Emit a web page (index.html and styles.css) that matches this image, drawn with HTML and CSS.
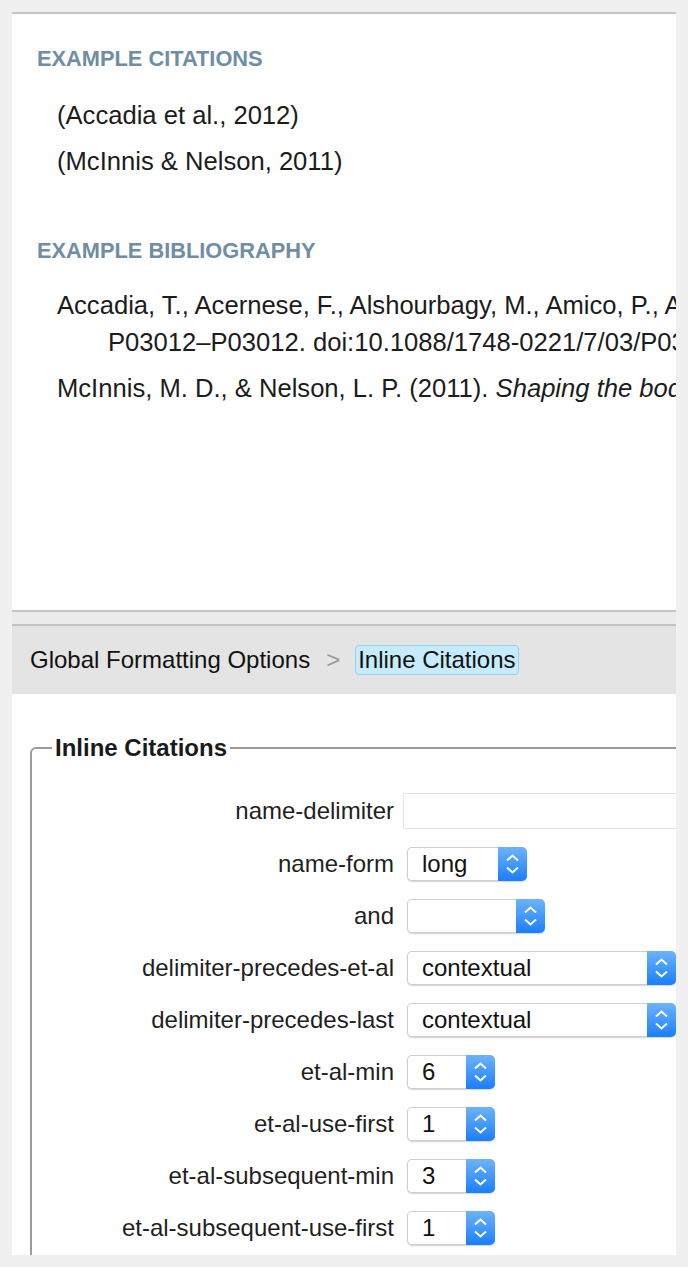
FILE: index.html
```html
<!DOCTYPE html>
<html lang="en">
<head>
<meta charset="utf-8">
<title>Inline Citations</title>
<link rel="stylesheet" href="styles.css">
</head>
<body>
<div class="app">
  <section class="preview">
    <h2 class="heading">EXAMPLE CITATIONS</h2>
    <div class="citations">
      <p>(Accadia et al., 2012)</p>
      <p>(McInnis &amp; Nelson, 2011)</p>
    </div>
    <h2 class="heading heading-bib">EXAMPLE BIBLIOGRAPHY</h2>
    <div class="bib">
      <p class="entry">Accadia, T., Acernese, F., Alshourbagy, M., Amico, P., Antonucci, F., Aoudia, S., … Zendri, J.-P. (2012). Virgo: a laser interferometer to detect gravitational waves. <i>Journal of Instrumentation</i>, <i>7</i>(3),<br>P03012–P03012. doi:10.1088/1748-0221/7/03/P03012</p>
      <p class="entry">McInnis, M. D., &amp; Nelson, L. P. (2011). <i>Shaping the body politic: Art and political formation in early America</i>. Charlottesville: University of Virginia Press.</p>
    </div>
  </section>
  <div class="divider"></div>
  <nav class="crumbs">
    <span class="crumb">Global Formatting Options</span>
    <span class="crumb-sep">&gt;</span>
    <span class="crumb crumb-current">Inline Citations</span>
  </nav>
  <section class="editor">
    <fieldset class="group">
      <legend class="group-title">Inline Citations</legend>
      <div class="form">
        <label class="label">name-delimiter</label>
        <div class="text-input"></div>

        <label class="label">name-form</label>
        <div class="select w-120"><span class="select-value">long</span><span class="select-btn"><svg width="29" height="34" viewBox="0 0 29 34"><path d="M9 13.5 L14.5 8.5 L20 13.5 M9 20.5 L14.5 25.5 L20 20.5" fill="none" stroke="#fff" stroke-width="2"/></svg></span></div>

        <label class="label">and</label>
        <div class="select w-138"><span class="select-value"></span><span class="select-btn"><svg width="29" height="34" viewBox="0 0 29 34"><path d="M9 13.5 L14.5 8.5 L20 13.5 M9 20.5 L14.5 25.5 L20 20.5" fill="none" stroke="#fff" stroke-width="2"/></svg></span></div>

        <label class="label">delimiter-precedes-et-al</label>
        <div class="select w-269"><span class="select-value">contextual</span><span class="select-btn"><svg width="29" height="34" viewBox="0 0 29 34"><path d="M9 13.5 L14.5 8.5 L20 13.5 M9 20.5 L14.5 25.5 L20 20.5" fill="none" stroke="#fff" stroke-width="2"/></svg></span></div>

        <label class="label">delimiter-precedes-last</label>
        <div class="select w-269"><span class="select-value">contextual</span><span class="select-btn"><svg width="29" height="34" viewBox="0 0 29 34"><path d="M9 13.5 L14.5 8.5 L20 13.5 M9 20.5 L14.5 25.5 L20 20.5" fill="none" stroke="#fff" stroke-width="2"/></svg></span></div>

        <label class="label">et-al-min</label>
        <div class="select w-88"><span class="select-value">6</span><span class="select-btn"><svg width="29" height="34" viewBox="0 0 29 34"><path d="M9 13.5 L14.5 8.5 L20 13.5 M9 20.5 L14.5 25.5 L20 20.5" fill="none" stroke="#fff" stroke-width="2"/></svg></span></div>

        <label class="label">et-al-use-first</label>
        <div class="select w-88"><span class="select-value">1</span><span class="select-btn"><svg width="29" height="34" viewBox="0 0 29 34"><path d="M9 13.5 L14.5 8.5 L20 13.5 M9 20.5 L14.5 25.5 L20 20.5" fill="none" stroke="#fff" stroke-width="2"/></svg></span></div>

        <label class="label">et-al-subsequent-min</label>
        <div class="select w-88"><span class="select-value">3</span><span class="select-btn"><svg width="29" height="34" viewBox="0 0 29 34"><path d="M9 13.5 L14.5 8.5 L20 13.5 M9 20.5 L14.5 25.5 L20 20.5" fill="none" stroke="#fff" stroke-width="2"/></svg></span></div>

        <label class="label">et-al-subsequent-use-first</label>
        <div class="select w-88"><span class="select-value">1</span><span class="select-btn"><svg width="29" height="34" viewBox="0 0 29 34"><path d="M9 13.5 L14.5 8.5 L20 13.5 M9 20.5 L14.5 25.5 L20 20.5" fill="none" stroke="#fff" stroke-width="2"/></svg></span></div>
      </div>
    </fieldset>
  </section>
</div>
</body>
</html>
```

FILE: styles.css
```css
html, body {
  margin: 0;
  padding: 0;
}

body {
  background: #f0f0f0;
  font-family: "Liberation Sans", Arial, Helvetica, sans-serif;
  color: #1c1c1c;
}

.app {
  padding: 12px;
}

p {
  margin: 0;
}

/* ---------- preview ---------- */
.preview {
  box-sizing: border-box;
  height: 600px;
  background: #fff;
  border-top: 2px solid #c3c3c3;
  border-bottom: 2px solid #c3c3c3;
  padding: 32px 0 0 25px;
  overflow: hidden;
}

.heading {
  margin: 0;
  font-size: 21.8px;
  line-height: 26px;
  font-weight: bold;
  color: #6f8ea4;
}

.citations {
  margin-top: 19.6px;
  padding-left: 20px;
  font-size: 25.6px;
  line-height: 46px;
}

.heading-bib {
  margin-top: 54.2px;
}

.bib {
  margin-top: 23.5px;
  padding-left: 20px;
  font-size: 25.6px;
  line-height: 36.5px;
  white-space: nowrap;
}

.entry {
  padding-left: 51px;
  text-indent: -51px;
}

.entry + .entry {
  margin-top: 9.5px;
}

/* ---------- divider & breadcrumbs ---------- */
.divider {
  height: 12px;
  background: #ebebeb;
}

.crumbs {
  display: flex;
  align-items: center;
  height: 68px;
  border-top: 2px solid #c3c3c3;
  background: #e4e4e4;
  padding-left: 18px;
  font-size: 24px;
  line-height: 28px;
  color: #111;
}

.crumb-sep {
  color: #9b9b9b;
  margin: 0 15px 0 16px;
}

.crumb-current {
  background: #c6ebfc;
  border: 1px solid #8fd3f5;
  border-radius: 4px;
  padding: 0 2px;
}

/* ---------- editor ---------- */
.editor {
  box-sizing: border-box;
  height: 561px;
  background: #fff;
  padding-top: 40px;
  overflow: hidden;
}

.group {
  margin: 0 0 0 18px;
  width: 700px;
  min-width: 0;
  border: 2px solid #9b9b9b;
  border-radius: 6px;
  padding: 31px 0 60px 20px;
}

.group-title {
  padding: 0 3px;
  font-size: 24px;
  line-height: 28px;
  font-weight: bold;
  color: #1a1a1a;
}

.form {
  display: grid;
  grid-template-columns: 342px auto;
  column-gap: 13px;
  row-gap: 18px;
  align-items: center;
  justify-items: start;
}

.label {
  justify-self: end;
  text-align: right;
  font-size: 24px;
  line-height: 28px;
  color: #1f1f1f;
}

.text-input {
  box-sizing: border-box;
  height: 36px;
  width: 420px;
  margin-left: -4px;
  border: 1px solid #e3e3e3;
  background: #fff;
}

.select {
  display: flex;
  box-sizing: border-box;
  height: 34px;
  border-radius: 5px;
  box-shadow: 0 1px 1.5px rgba(0, 0, 0, 0.18);
  background: #fff;
}

.w-120 { width: 120px; }
.w-138 { width: 138px; }
.w-269 { width: 269px; }
.w-88  { width: 88px; }

.select-value {
  flex: 1;
  box-sizing: border-box;
  height: 34px;
  padding-left: 14px;
  border: 1px solid #d0d0d0;
  border-right: none;
  border-radius: 5px 0 0 5px;
  font-size: 24px;
  line-height: 32px;
  color: #111;
}

.select-btn {
  display: flex;
  width: 29px;
  height: 34px;
  border-radius: 0 5px 5px 0;
  background: linear-gradient(#6db3fb, #1a7ffa);
}
```
